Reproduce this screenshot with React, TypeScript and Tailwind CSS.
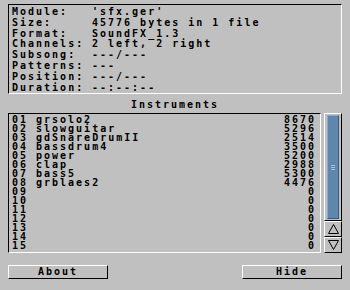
import React from 'react';

const info: [string, string][] = [
  ['Module:', "'sfx.ger'"],
  ['Size:', '45776 bytes in 1 file'],
  ['Format:', 'SoundFX_1.3'],
  ['Channels:', '2 left, 2 right'],
  ['Subsong:', '---/---'],
  ['Patterns:', '---'],
  ['Position:', '---/---'],
  ['Duration:', '--:--:--'],
];

const instruments: [string, string, number][] = [
  ['01', 'grsolo2', 8670],
  ['02', 'slowguitar', 5296],
  ['03', 'gdSnareDrumII', 2514],
  ['04', 'bassdrum4', 3500],
  ['05', 'power', 5200],
  ['06', 'clap', 2988],
  ['07', 'bass5', 5300],
  ['08', 'grblaes2', 4476],
  ['09', '', 0],
  ['10', '', 0],
  ['11', '', 0],
  ['12', '', 0],
  ['13', '', 0],
  ['14', '', 0],
  ['15', '', 0],
];

function Arrow({ up }: { up?: boolean }) {
  return (
    <div className="h-[16px] flex items-center justify-center border-t border-l border-white border-b border-r border-b-black border-r-black">
      <svg width="11" height="10" viewBox="0 0 11 10">
        <polygon
          points={up ? '5.5,0.5 10.5,9.5 0.5,9.5' : '0.5,0.5 10.5,0.5 5.5,9.5'}
          fill="none"
          stroke="#000"
          strokeWidth="1"
        />
      </svg>
    </div>
  );
}

export default function App() {
  return (
    <div
      className="w-[350px] h-[290px] bg-[#c0c0c0] text-black font-bold text-[10px] tracking-[2px] flex flex-col"
      style={{ fontFamily: '"DejaVu Sans Mono", "Liberation Mono", monospace' }}
    >
      {/* Info panel */}
      <div className="ml-[8px] mt-[4px] w-[334px] h-[90px] border-t border-l border-black border-b border-r border-b-white border-r-white pl-[3px] pt-[2px] leading-[10.8px]">
        {info.map(([k, v]) => (
          <div key={k} className="flex whitespace-pre">
            <span className="w-[80px]">{k}</span>
            <span>{v}</span>
          </div>
        ))}
      </div>

      {/* Instruments */}
      <div className="h-[19px] flex items-center justify-center pt-[2px]">Instruments</div>

      <div className="flex ml-[8px] gap-[3px]">
        <div className="w-[313px] h-[140px] border-t border-l border-black border-b border-r border-b-white border-r-white pl-[3px] pr-[4px] pt-[1px] leading-[9px]">
          {instruments.map(([n, name, size]) => (
            <div key={n} className="flex h-[9px] items-center whitespace-pre">
              <span className="w-[24px]">{n}</span>
              <span className="flex-1">{name}</span>
              <span>{size}</span>
            </div>
          ))}
        </div>

        <div className="w-[18px] h-[140px] flex flex-col">
          <div className="flex-1 border-t border-l border-white border-b border-r border-b-black border-r-black px-[2px] py-[1px]">
            <div className="h-full bg-[#5f87ae] border-l border-t border-[#8eaacb] border-r border-b border-r-[#3b5877] border-b-[#3b5877] flex items-center justify-center">
              <div className="flex flex-col gap-[1px]">
                <div className="w-[4px] h-[1px] bg-[#a9c0da]" />
                <div className="w-[4px] h-[1px] bg-[#a9c0da]" />
                <div className="w-[4px] h-[1px] bg-[#a9c0da]" />
              </div>
            </div>
          </div>
          <Arrow up />
          <Arrow />
        </div>
      </div>

      {/* Buttons */}
      <div className="flex justify-between ml-[8px] mr-[8px] mt-[12px]">
        <button className="w-[100px] h-[14px] flex items-center justify-center border-t border-l border-white border-b border-r border-b-black border-r-black leading-none">
          About
        </button>
        <button className="w-[100px] h-[14px] flex items-center justify-center border-t border-l border-white border-b border-r border-b-black border-r-black leading-none">
          Hide
        </button>
      </div>
    </div>
  );
}
